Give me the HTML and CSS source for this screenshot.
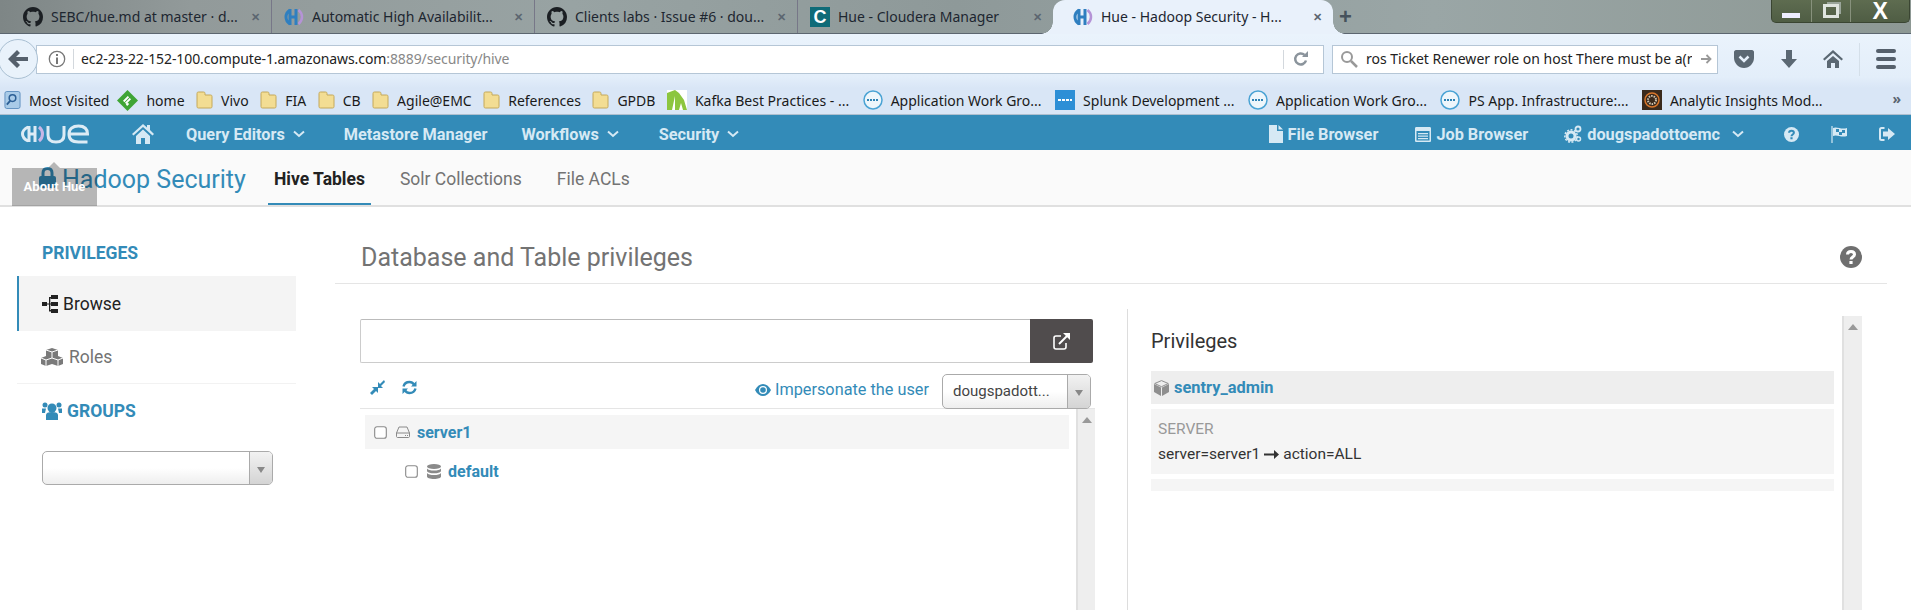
FILE: index.html
```
<!DOCTYPE html>
<html lang="en">
<head>
<meta charset="utf-8">
<title>Hue - Hadoop Security - Hive Tables</title>
<link rel="stylesheet" href="styles.css">
</head>
<body>
<svg class="defs" width="0" height="0" aria-hidden="true">
  <symbol id="gh" viewBox="0 0 16 16"><path fill="#1b1f23" d="M8 0C3.58 0 0 3.58 0 8c0 3.54 2.29 6.53 5.47 7.59.4.07.55-.17.55-.38 0-.19-.01-.82-.01-1.49-2.01.37-2.53-.49-2.69-.94-.09-.23-.48-.94-.82-1.13-.28-.15-.68-.52-.01-.53.63-.01 1.08.58 1.23.82.72 1.21 1.87.87 2.33.66.07-.52.28-.87.51-1.07-1.78-.2-3.64-.89-3.64-3.95 0-.87.31-1.59.82-2.15-.08-.2-.36-1.02.08-2.12 0 0 .67-.21 2.2.82.64-.18 1.32-.27 2-.27.68 0 1.36.09 2 .27 1.53-1.04 2.2-.82 2.2-.82.44 1.1.16 1.92.08 2.12.51.56.82 1.27.82 2.15 0 3.07-1.87 3.75-3.65 3.95.29.25.54.73.54 1.48 0 1.07-.01 1.93-.01 2.2 0 .21.15.46.55.38A8.013 8.013 0 0016 8c0-4.42-3.58-8-8-8z"/></symbol>
  <symbol id="huefav" viewBox="0 0 20 20"><path fill="none" stroke="#2f7fc0" stroke-width="3" d="M6 3C3 5 2 7.500 2 10s1 5 4 7M6 2v16M12 2v16M5 10h8"/><path fill="none" stroke="#b593d6" stroke-width="2.500" d="M14.500 3c2.500 2 3.500 4.500 3.500 7s-1 5-3.500 7"/></symbol>
  <symbol id="folder" viewBox="0 0 17 20"><path fill="#f3dd93" stroke="#c4a85a" d="M1 3.500C1 2.500 1.500 2 2.500 2h5c1 0 1.500.5 1.500 1.500V5h5.500c1 0 1.500.5 1.500 1.500v10c0 1-.5 1.500-1.500 1.500h-12C1.500 18 1 17.500 1 16.500z"/></symbol>
  <symbol id="dell" viewBox="0 0 20 20"><circle cx="10" cy="10" r="9" fill="#eef6fb" stroke="#4aa3d4" stroke-width="1.500"/><path stroke="#2f83b5" stroke-width="2" stroke-dasharray="2 1" d="M4 10h12"/></symbol>
  <symbol id="chev" viewBox="0 0 12 8"><path fill="none" stroke="#d6e9f4" stroke-width="2" d="M1 1.500l5 4.500 5-4.500"/></symbol>
  <symbol id="help" viewBox="0 0 22 22"><circle cx="11" cy="11" r="11"/><path fill="none" stroke="currentColor" stroke-width="3" d="M7.500 8.500C7.500 6.500 9 5.500 11 5.500s3.500 1 3.500 3c0 2.500-3.500 2.500-3.500 5"/><path fill="currentColor" d="M9.400 15h3.200v3h-3.200z"/></symbol>
  <symbol id="check" viewBox="0 0 14 14"><rect x=".75" y=".75" width="12.500" height="12.500" rx="2.500" fill="#fff" stroke="#8a8a8a" stroke-width="1.200"/></symbol>
</svg>

<header class="tabstrip">
  <div class="tab"><svg class="fav"><use href="#gh"/></svg><span class="tab-t">SEBC/hue.md at master · d...</span><span class="tab-x">✕</span></div>
  <div class="tab tab-b"><svg class="fav"><use href="#huefav"/></svg><span class="tab-t">Automatic High Availabilit...</span><span class="tab-x">✕</span></div>
  <div class="tab tab-c"><svg class="fav"><use href="#gh"/></svg><span class="tab-t">Clients labs · Issue #6 · dou...</span><span class="tab-x">✕</span></div>
  <div class="tab tab-d"><span class="cm-logo">C</span><span class="tab-t">Hue - Cloudera Manager</span><span class="tab-x">✕</span></div>
  <div class="tab tab-on"><svg class="fav"><use href="#huefav"/></svg><span class="tab-t">Hue - Hadoop Security - H...</span><span class="tab-x">✕</span></div>
  <span class="newtab">+</span>
  <div class="winbtns">
    <span class="win win-min"><i></i></span>
    <span class="win win-max"><i></i></span>
    <span class="win win-close">X</span>
  </div>
</header>

<div class="toolbar">
  <div class="backbtn"><svg width="22" height="20" viewBox="0 0 22 20"><path fill="#55606c" d="M10 1l3 3-4 4h12v4H9l4 4-3 3-9-9z"/></svg></div>
  <div class="urlbar">
    <svg class="info" width="18" height="18" viewBox="0 0 18 18"><circle cx="9" cy="9" r="7.700" fill="none" stroke="#777" stroke-width="1.300"/><path fill="#777" d="M8 4h2v2H8zM8 7.500h2V14H8z"/></svg>
    <span class="url">ec2-23-22-152-100.compute-1.amazonaws.com<span class="url-dim">:8889/security/hive</span></span>
    <svg class="reload" width="18" height="18" viewBox="0 0 18 18"><path fill="none" stroke="#8b949c" stroke-width="2.500" d="M14 10.500A5.500 5.500 0 1 1 12.500 5"/><path fill="#8b949c" d="M10 7h6V1z"/></svg>
  </div>
  <div class="searchbar">
    <svg width="18" height="18" viewBox="0 0 18 18"><circle cx="7" cy="7" r="5" fill="none" stroke="#999" stroke-width="2"/><path stroke="#999" stroke-width="2.500" d="M11 11l6 6"/></svg>
    <span class="search-t">ros Ticket Renewer role on host There must be a(r</span>
    <svg width="12" height="12" viewBox="0 0 12 12"><path fill="none" stroke="#999" stroke-width="1.800" d="M1 6h9M6.500 2l4 4-4 4"/></svg>
  </div>
  <svg class="tb-ic tb-pocket" width="20" height="20" viewBox="0 0 20 20"><path fill="#5b6873" d="M2 1h16c1 0 2 1 2 2v6c0 5-4.500 10-10 10S0 14 0 9V3c0-1 1-2 2-2z"/><path fill="none" stroke="#e6f0fb" stroke-width="2.500" d="M5.500 7.500L10 12l4.500-4.500"/></svg>
  <svg class="tb-ic tb-down" width="18" height="20" viewBox="0 0 18 20"><path fill="#5b6873" d="M6 1h6v9h5l-8 9-8-9h5z"/></svg>
  <svg class="tb-ic tb-home" width="20" height="20" viewBox="0 0 20 20"><path fill="#5b6873" d="M10 1l10 9-1.500 1.500L10 4l-8.500 7.500L0 10z"/><path fill="#5b6873" d="M4 12l6-5 6 5v7h-4v-5H8v5H4z"/></svg>
  <span class="tb-sep"></span>
  <div class="burger"><i></i><i></i><i></i></div>
</div>

<nav class="bookmarks">
  <span class="bm bm-first"><svg class="bm-ic" viewBox="0 0 18 20"><rect x="1" y="1" width="16" height="18" rx="2" fill="#a9cbe8" stroke="#5f8fbf"/><circle cx="9" cy="8" r="3.500" fill="none" stroke="#2c5f95" stroke-width="1.600"/><path stroke="#2c5f95" stroke-width="2" d="M6.500 11L3 15"/></svg>Most Visited</span>
  <span class="bm"><svg class="bm-ic bm-home" viewBox="0 0 22 22"><path fill="#3fa535" d="M11 0l11 11-11 11L0 11z"/><path stroke="#fff" stroke-width="2" d="M7 12l5-5M9 14l5-5M10 16l2-2"/></svg>home</span>
  <span class="bm"><svg class="bm-ic"><use href="#folder"/></svg>Vivo</span>
  <span class="bm"><svg class="bm-ic"><use href="#folder"/></svg>FIA</span>
  <span class="bm"><svg class="bm-ic"><use href="#folder"/></svg>CB</span>
  <span class="bm"><svg class="bm-ic"><use href="#folder"/></svg>Agile@EMC</span>
  <span class="bm"><svg class="bm-ic"><use href="#folder"/></svg>References</span>
  <span class="bm"><svg class="bm-ic"><use href="#folder"/></svg>GPDB</span>
  <span class="bm bm-long"><svg class="bm-ic bm-w20" viewBox="0 0 20 20"><path fill="#fff" d="M0 0h20v20H0z"/><path fill="#8cc63f" d="M0 20V3L8 0l4 3 5 7 3 10h-4l-2-7-2 7H8V6L5 20z"/></svg>Kafka Best Practices - ...</span>
  <span class="bm bm-long"><svg class="bm-ic bm-w20"><use href="#dell"/></svg>Application Work Gro...</span>
  <span class="bm bm-long"><svg class="bm-ic bm-w20" viewBox="0 0 20 20"><path fill="#2d8fd6" d="M0 0h20v20H0z"/><path stroke="#fff" stroke-width="2" stroke-dasharray="3 1" d="M3 10h14"/></svg>Splunk Development ...</span>
  <span class="bm bm-long"><svg class="bm-ic bm-w20"><use href="#dell"/></svg>Application Work Gro...</span>
  <span class="bm bm-long"><svg class="bm-ic bm-w20"><use href="#dell"/></svg>PS App. Infrastructure:...</span>
  <span class="bm"><svg class="bm-ic bm-w20" viewBox="0 0 20 20"><path fill="#3a2a1c" d="M0 0h20v20H0z"/><circle cx="10" cy="10" r="7" fill="none" stroke="#d9772b" stroke-width="1.500"/><circle cx="10" cy="10" r="4" fill="none" stroke="#cfc4b0" stroke-width="2" stroke-dasharray="1.500 1"/></svg>Analytic Insights Mod...</span>
  <span class="bm-more">»</span>
</nav>

<nav class="huenav">
  <svg class="huelogo" width="68" height="20" viewBox="0 0 68 20" role="img" aria-label="Hue">
    <g fill="none" stroke="#dcebf5" stroke-width="3">
      <path d="M7 3C3 5 1.500 7.500 1.500 10S3 15 7 17M8 2v16M14 2v16M7 10h8"/>
      <path stroke="#c9b6e6" d="M18 3c2.500 2 3.500 4.500 3.500 7S20.500 15 18 17"/>
      <path d="M27 2v9c0 4.500 2.500 7 8 7s8-2.500 8-7V2"/>
      <path d="M48 10h18.500c0-5-3-8-9-8S48 5 48 10s3 8 9.500 8h9"/>
    </g>
  </svg>
  <svg class="nav-home" width="22" height="20" viewBox="0 0 22 20"><path fill="#d6e9f4" d="M11 0l4 3.500V1h3v5l4 4-1.500 1.500L11 3 1.500 11.500 0 10z"/><path fill="#d6e9f4" d="M4 12l7-6.500 7 6.500v8h-5v-6H9v6H4z"/></svg>
  <span class="ni ni-q">Query Editors<svg class="chev"><use href="#chev"/></svg></span>
  <span class="ni ni-m">Metastore Manager</span>
  <span class="ni ni-w">Workflows<svg class="chev"><use href="#chev"/></svg></span>
  <span class="ni ni-s">Security<svg class="chev"><use href="#chev"/></svg></span>
  <div class="nav-right">
    <span class="ni"><svg class="ni-ic" width="14" height="18" viewBox="0 0 14 18"><path fill="#d6e9f4" d="M0 0h8v6h6v12H0zM9.500 0L14 4.500H9.500z"/></svg>File Browser</span>
    <span class="ni ni-job"><svg class="ni-ic" width="16" height="15" viewBox="0 0 16 15"><path fill="#d6e9f4" fill-rule="evenodd" d="M1.500 0h13C15.500 0 16 .5 16 1.500v12c0 1-.5 1.500-1.500 1.500h-13C.5 15 0 14.500 0 13.500v-12C0 .5.500 0 1.500 0zM1.500 4v9.500h13V4zM3 6h10v1.300H3zM3 8.500h10v1.300H3zM3 11h10v1.300H3z"/></svg>Job Browser</span>
    <span class="ni ni-user"><svg class="ni-ic" width="18" height="18" viewBox="0 0 18 18"><circle cx="7" cy="11" r="4" fill="none" stroke="#d6e9f4" stroke-width="3"/><circle cx="7" cy="11" r="6.200" fill="none" stroke="#d6e9f4" stroke-width="1.500" stroke-dasharray="2 1.500"/><circle cx="14" cy="4" r="2.500" fill="none" stroke="#d6e9f4" stroke-width="1.800"/><circle cx="14.500" cy="14" r="2" fill="none" stroke="#d6e9f4" stroke-width="1.500"/></svg>dougspadottoemc<svg class="chev chev-u"><use href="#chev"/></svg></span>
    <svg class="ni-help" width="15" height="15"><use href="#help"/></svg>
    <svg class="ni-flag" width="16" height="17" viewBox="0 0 16 17"><path stroke="#d6e9f4" stroke-width="1.200" d="M1 0v17"/><path fill="#d6e9f4" d="M2 2c4-2 8 2 14 0v8c-6 2-10-2-14 0z"/><path fill="#338bb8" d="M5 3h3v3H5zM11 4h3v3h-3zM8 6h3v3H8z"/></svg>
    <svg class="ni-out" width="16" height="14" viewBox="0 0 16 14"><path fill="none" stroke="#d6e9f4" stroke-width="2" d="M5.500 1H2.500C1.500 1 1 1.500 1 2.500v9c0 1 .5 1.500 1.500 1.500h3"/><path fill="#d6e9f4" d="M4 4.500h5V1l7 6-7 6V9.500H4z"/></svg>
  </div>
</nav>

<div class="subnav">
  <svg class="lock" width="17" height="21" viewBox="0 0 17 21"><path fill="none" stroke="#338bb8" stroke-width="3" d="M4 10V6c0-3 2-4.500 4.500-4.500S13 3 13 6v4"/><rect y="9" width="17" height="12" rx="2" fill="#338bb8"/></svg>
  <span class="brand">Hadoop Security</span>
  <span class="subtab subtab-on">Hive Tables</span>
  <span class="subtab">Solr Collections</span>
  <span class="subtab">File ACLs</span>
  <div class="tooltip">About Hue</div>
</div>

<main class="page">
  <aside class="side">
    <h4 class="side-h">PRIVILEGES</h4>
    <div class="side-i side-on"><svg width="16" height="18" viewBox="0 0 16 18"><path fill="#222" d="M0 7h5v4H0zM9 0h7v4H9zM9 7h7v4H9zM9 14h7v4H9zM5 8.500h2V2h2v1.500H8.300V8.500H9v1H8.300V15H9v1.500H7V9.500H5z"/></svg>Browse</div>
    <div class="side-i side-roles"><svg width="22" height="18" viewBox="0 0 22 18"><path fill="#7a7a7a" d="M11 0l6 2v6l-6 2-6-2V2zM5 8l6 2v6l-6 2-5-2v-6zM17 8l5 2v6l-5 2-6-2v-6z"/><path fill="none" stroke="#fff" stroke-width="1" d="M5 2l6 2 6-2M11 4v6M0 10l5 2 6-2M5 12v6M11 10l6 2 5-2M17 12v6"/></svg>Roles</div>
    <h4 class="side-h side-g"><svg width="20" height="18" viewBox="0 0 20 18"><circle cx="10" cy="6" r="4.500" fill="#338bb8"/><circle cx="3" cy="3" r="2.500" fill="#338bb8"/><circle cx="17" cy="3" r="2.500" fill="#338bb8"/><path fill="#338bb8" d="M4 18v-5c0-2 2-3 6-3s6 1 6 3v5zM0 6.500h4L3 11H0zM16 6.500h4V11h-3z"/></svg>GROUPS</h4>
    <div class="combo combo-g"><span class="combo-t"></span><span class="combo-a"></span></div>
  </aside>

  <section class="content">
    <div class="title-row">
      <h1 class="title">Database and Table privileges</h1>
      <svg class="title-help" width="22" height="22"><use href="#help"/></svg>
    </div>
    <div class="panes">
      <div class="left">
        <div class="inputgrp">
          <input class="tree-input" type="text" aria-label="Path">
          <span class="go"><svg width="17" height="17" viewBox="0 0 17 17"><path fill="none" stroke="#fff" stroke-width="1.600" d="M8 3H3C1.800 3 1 3.800 1 5v9c0 1.200.8 2 2 2h8c1.200 0 2-.8 2-2v-4"/><path fill="none" stroke="#fff" stroke-width="2" d="M6 11l9-9"/><path fill="#fff" d="M10 0h7v7z"/></svg></span>
        </div>
        <div class="actions">
          <svg class="act" width="15" height="15" viewBox="0 0 15 15"><path fill="#338bb8" d="M0 13l4-4-2-2h6v6l-2-2-4 4zM15 2l-4 4 2 2H8V2l2 2 4-4z"/></svg>
          <svg class="act act-r" width="15" height="15" viewBox="0 0 15 15"><path fill="none" stroke="#338bb8" stroke-width="2.400" d="M1.500 6.500C2.300 3.500 4.500 2 7.500 2c2 0 3.500 1 4.500 2.500M13.500 8.500c-.8 3-3 4.500-6 4.500-2 0-3.500-1-4.500-2.500"/><path fill="#338bb8" d="M14.500 1v5.500H9zM.5 14V8.500H6z"/></svg>
          <span class="imp"><svg width="16" height="12" viewBox="0 0 16 12"><path fill="#338bb8" fill-rule="evenodd" d="M0 6c2-4 5-6 8-6s6 2 8 6c-2 4-5 6-8 6S2 10 0 6zm8-4a4 4 0 1 0 0 8 4 4 0 0 0 0-8z"/><circle cx="8" cy="6" r="2.800" fill="#338bb8"/></svg>Impersonate the user</span>
          <div class="combo combo-u"><span class="combo-t">dougspadott...</span><span class="combo-a"></span></div>
        </div>
        <div class="treebox">
          <div class="tree">
            <div class="node node-root"><svg class="cb"><use href="#check"/></svg><svg class="nic" width="14" height="12" viewBox="0 0 14 12"><path fill="none" stroke="#8a8a8a" d="M3 1h8l2.500 6v3.500c0 .5-.5 1-1 1h-11c-.5 0-1-.5-1-1V7zM.5 7h13"/><path fill="#8a8a8a" d="M9 9h1v1H9zM11 9h1v1h-1z"/></svg><a class="lnk">server1</a></div>
            <div class="node node-db"><svg class="cb"><use href="#check"/></svg><svg class="nic" width="14" height="15" viewBox="0 0 14 15"><ellipse cx="7" cy="2.500" rx="7" ry="2.500" fill="#8a8a8a"/><path fill="#8a8a8a" d="M0 4.500c1 1.500 3.500 2 7 2s6-.5 7-2v2.800c-1 1.500-3.500 2-7 2s-6-.5-7-2zM0 9c1 1.500 3.500 2 7 2s6-.5 7-2v3.500C14 14 11 15 7 15s-7-1-7-2.500z"/></svg><a class="lnk">default</a></div>
          </div>
          <div class="sbar"><span class="sbar-up"></span></div>
        </div>
      </div>
      <div class="right">
        <div class="right-main">
          <h3 class="priv-h">Privileges</h3>
          <div class="role"><svg width="15" height="16" viewBox="0 0 15 16"><path fill="#8f8f8f" d="M7 7.500L0 4v8l7 4zM8 7.500L15 4v8l-7 4z"/><path fill="none" stroke="#8f8f8f" d="M.7 3.500L7.500.6l6.800 2.900-6.800 3.200z"/></svg><a class="lnk lnk-role">sentry_admin</a></div>
          <div class="priv">
            <div class="priv-type">SERVER</div>
            <div class="priv-v">server=server1<svg width="15" height="9" viewBox="0 0 15 9"><path fill="#333" d="M0 3.500h10V0l5 4.500L10 9V5.500H0z"/></svg>action=ALL</div>
          </div>
          <div class="priv-empty"></div>
        </div>
        <div class="sbar sbar-r"><span class="sbar-up"></span></div>
      </div>
    </div>
  </section>
</main>
</body>
</html>
```
FILE: styles.css
```
* { box-sizing: border-box; }
html, body { margin: 0; height: 100%; overflow: hidden; background: #fff; }
body { width: 1911px; height: 610px; display: flex; flex-direction: column; font-family: Roboto, "Liberation Sans", sans-serif; color: #333; }
.defs { position: absolute; }
svg { flex: none; display: block; }
h1, h3, h4 { margin: 0; }

/* browser chrome */
.tabstrip { height: 34px; flex: none; display: flex; align-items: center; position: relative; padding-left: 0; font-family: "Noto Sans", sans-serif; font-size: 14px; color: #1d2630;
  background: linear-gradient(90deg, #7e8686 0, #929a9a 10%, #98a3a3 30%, #8e9999 50%, #9aa6a6 75%, #8d9894 100%); border-bottom: 1px solid #5c6670; }
.tab { width: 272px; height: 33px; display: flex; align-items: center; padding: 0 0 0 23px; border-right: 1px solid #778; flex: none; position: relative; }
.tab-b { width: 263px; padding-left: 12px; }
.tab-c { width: 263px; padding-left: 12px; }
.tab-d { width: 255px; padding-left: 12px; border-right: 0; }
.tab-on { width: 280px; padding-left: 20px; border-right: 0; height: 34px; background: #e9f1fb; border-radius: 12px 12px 0 0; }
.tab-on::before, .tab-on::after { content: ""; position: absolute; bottom: 0; width: 12px; height: 12px; }
.tab-on::before { left: -12px; background: radial-gradient(circle at 0 0, transparent 11.500px, #e9f1fb 12px); }
.tab-on::after { right: -12px; background: radial-gradient(circle at 100% 0, transparent 11.500px, #e9f1fb 12px); }
.fav { width: 20px; height: 20px; margin-right: 8px; flex: none; }
.cm-logo { width: 20px; height: 20px; margin-right: 8px; background: #0f6b78; color: #fff; font: 700 18px/20px "Liberation Sans", sans-serif; text-align: center; }
.tab-t { flex: 1; white-space: nowrap; overflow: hidden; }
.tab-x { width: 12px; margin-right: 10px; font-size: 11px; font-weight: 700; color: #5b6670; text-align: center; }
.newtab { margin-left: 6px; font: 700 22px/1 "Liberation Sans", sans-serif; color: #46525c; }
.winbtns { position: absolute; right: 1px; top: 0; height: 23px; width: 139px; display: flex; background: linear-gradient(#5e6c50, #4f5d44); border: 1px solid #3a4532; border-top: 0; border-radius: 0 0 5px 5px; }
.win { flex: 1; display: flex; align-items: center; justify-content: center; border-right: 1px solid #87917c; color: #fff; }
.win-close { flex: 1.500; border-right: 0; font: 700 23px/1 "Liberation Sans", sans-serif; }
.win-min i { width: 18px; height: 5px; background: #eef; margin-top: 8px; }
.win-max i { width: 16px; height: 14px; border: 3px solid #dfe5df; box-shadow: 3px -3px 0 -1px #9aa59a; }

.toolbar { height: 43px; flex: none; display: flex; align-items: center; background: linear-gradient(#eaf3fc, #e3eefa); font-family: "Noto Sans", sans-serif; font-size: 14px; position: relative; padding-left: 36px; padding-top: 7px; }
.backbtn { position: absolute; left: -2px; top: 5px; width: 40px; height: 40px; border-radius: 50%; background: #e9f2fb; border: 1px solid #a9bfd2; display: flex; align-items: center; justify-content: center; z-index: 1; }
.urlbar { width: 1288px; height: 29px; background: #fff; border: 1px solid #b5c6d6; display: flex; align-items: center; padding-left: 11px; position: relative; }
.info { margin-right: 7px; }
.url { border-left: 1px solid #d3d8dd; padding-left: 7px; color: #222; white-space: nowrap; line-height: 20px; letter-spacing: -.1px; }
.url-dim { color: #888; }
.reload { margin-left: auto; margin-right: 13px; }
.urlbar::after { content: ""; position: absolute; left: 1246px; top: 4px; height: 19px; border-left: 1px solid #d3d8dd; }
.searchbar { width: 386px; height: 29px; margin-left: 8px; background: #fff; border: 1px solid #b5c6d6; display: flex; align-items: center; padding-left: 7px; gap: 8px; }
.search-t { width: 326px; overflow: hidden; white-space: nowrap; color: #222; line-height: 20px; }
.tb-ic { margin-left: 16px; }
.tb-down { margin-left: 26px; }
.tb-home { margin-left: 25px; }
.tb-sep { width: 1px; height: 33px; background: #d4dfe9; margin-left: 16px; }
.burger { width: 20px; margin-left: 16px; display: flex; flex-direction: column; gap: 4px; }
.burger i { height: 4px; border-radius: 2px; background: #55606c; }

.bookmarks { height: 38px; flex: none; display: flex; align-items: center; padding: 9px 0 0 4px; background: linear-gradient(#e3eefa, #d9e6f6 30%); font-family: "Noto Sans", sans-serif; font-size: 14px; color: #1a1a1a; border-bottom: 1px solid #aebfcf; position: relative; }
.bm { display: flex; align-items: center; gap: 8px; margin-right: 11.500px; white-space: nowrap; }
.bm-first { margin-right: 8px; }
.bm-long { margin-right: 13.500px; }
.bm-ic { width: 17px; height: 20px; }
.bm-home { width: 21px; height: 21px; }
.bm-w20 { width: 20px; height: 20px; }
.bm-more { position: absolute; right: 10px; top: 12px; color: #5a6570; font-weight: 700; }

/* hue nav */
.huenav { height: 35px; flex: none; display: flex; align-items: center; background: #338bb8; color: #d6e9f4; font-size: 16.300px; font-weight: 700; padding: 3px 0 0 21px; }
.nav-home { margin-left: 43px; }
.ni { display: flex; align-items: center; white-space: nowrap; }
.ni-q { margin-left: 32px; }
.ni-m { margin-left: 39px; }
.ni-w { margin-left: 34px; }
.ni-s { margin-left: 40px; }
.chev { width: 12px; height: 8px; margin-left: 8px; }
.chev-u { margin-left: 12px; }
.nav-right { margin-left: auto; display: flex; align-items: center; padding-right: 16px; }
.ni-ic { margin-right: 5px; }
.ni-job { margin-left: 37px; }
.ni-user { margin-left: 36px; }
.ni-help { fill: #d6e9f4; color: #338bb8; margin-left: 40px; }
.ni-flag { margin-left: 32px; }
.ni-out { margin-left: 32px; }

.subnav { height: 57px; flex: none; display: flex; align-items: stretch; background: #fafafa; border-bottom: 2px solid #e0e0e0; padding-left: 39px; position: relative; }
.lock { align-self: center; margin-right: 6px; }
.brand { align-self: center; margin-top: 3px; font-size: 25px; color: #338bb8; white-space: nowrap; width: 206px; }
.subtab { display: flex; align-items: center; padding: 2px 6px 0; margin-right: 23px; font-size: 17.500px; color: #737373; white-space: nowrap; }
.subtab-on { color: #222; font-weight: 700; box-shadow: inset 0 -2px 0 #338bb8; }
.tooltip { position: absolute; left: 12px; top: 18px; width: 85px; height: 38px; background: rgba(0,0,0,.27); color: #fff; font-size: 13px; font-weight: 700; text-align: center; line-height: 38px; }
.tooltip::before { content: ""; position: absolute; left: 36px; top: -6px; border: 6px solid transparent; border-top: 0; border-bottom-color: rgba(0,0,0,.27); }

/* page */
.page { flex: 1; display: flex; min-height: 0; }
.side { width: 279px; margin-left: 17px; flex: none; }
.side-h { color: #338bb8; font-size: 17.500px; font-weight: 700; line-height: 20px; padding-left: 25px; margin-top: 36px; margin-bottom: 13px; display: flex; align-items: center; }
.side-i { height: 55px; display: flex; align-items: center; padding-left: 25px; font-size: 17.500px; gap: 5px; }
.side-on { background: #f4f4f4; border-left: 2px solid #338bb8; padding-left: 23px; color: #222; }
.side-roles { height: 53px; border-bottom: 1px solid #f2f2f2; color: #737373; gap: 6px; padding-left: 24px; }
.side-g { margin: 17px 0 30px; gap: 5px; padding-left: 25px; }
.combo { display: flex; border: 1px solid #aaa; border-radius: 5px; background: linear-gradient(#fff 50%, #eee); }
.combo-g { margin-left: 25px; width: 231px; height: 34px; }
.combo-t { flex: 1; font-size: 14px; line-height: 33px; padding-left: 7px; white-space: nowrap; overflow: hidden; color: #444; }
.combo-a { width: 23px; border-left: 1px solid #aaa; border-radius: 0 4px 4px 0; background: linear-gradient(#f2f2f2, #d4d4d4); position: relative; }
.combo-a::after { content: ""; position: absolute; left: 7px; top: 15px; border: 4px solid transparent; border-bottom: 0; border-top: 6px solid #888; }
.content { flex: 1; margin-left: 39px; margin-right: 24px; min-width: 0; display: flex; flex-direction: column; }
.title-row { height: 77px; flex: none; display: flex; align-items: flex-end; justify-content: space-between; border-bottom: 1px solid #e5e5e5; padding: 0 25px 0 26px; position: relative; }
.title { font-size: 25px; font-weight: 400; color: #737373; line-height: 28px; margin-bottom: 11px; white-space: nowrap; }
.title-help { fill: #6f6f6f; color: #fff; margin-bottom: 15px; }
.panes { flex: 1; min-height: 0; display: flex; margin-top: 25px; }
.left { width: 735px; margin-left: 25px; flex: none; padding-top: 10px; display: flex; flex-direction: column; min-height: 0; }
.inputgrp { height: 44px; display: flex; flex: none; margin-right: 2px; }
.tree-input { flex: 1; height: 44px; border: 1px solid #ccc; border-top-color: #bbb; border-right: 0; border-radius: 2px 0 0 2px; outline: 0; background: #fff; padding: 0; }
.go { width: 63px; background: #504c4d; display: flex; align-items: center; justify-content: center; border-radius: 0 2px 2px 0; }
.actions { height: 46px; flex: none; display: flex; align-items: flex-end; border-bottom: 1px solid #e5e5e5; padding: 0 4px 0 10px; position: relative; }
.act { margin-bottom: 13px; }
.act-r { margin-left: 17px; }
.imp { margin-left: auto; display: flex; align-items: center; gap: 4px; color: #338bb8; font-size: 16.300px; margin-right: 13px; margin-bottom: 9px; }
.combo-u { width: 149px; height: 35px; margin-bottom: -1px; }
.combo-u .combo-t { font-size: 15px; line-height: 33px; padding-left: 10px; }
.treebox { flex: 1; display: flex; min-height: 0; }
.tree { flex: 1; padding: 6px 7px 0 5px; }
.node { display: flex; align-items: center; height: 34px; }
.node-root { background: #f5f5f5; padding-left: 9px; }
.node-db { margin-top: 2px; padding-left: 40px; height: 40px; }
.cb { width: 13px; height: 13px; margin-right: 9px; }
.nic { margin-right: 7px; }
.lnk { color: #338bb8; font-size: 16px; font-weight: 700; }
.lnk-role { font-size: 16.400px; }
.sbar { width: 19px; flex: none; background: #eee; border-left: 2px solid #e0e0e0; position: relative; }
.sbar-up { position: absolute; left: 4px; top: 8px; border: 5px solid transparent; border-top: 0; border-bottom: 6px solid #999; }
.right { flex: 1; margin-left: 32px; border-left: 1px solid #ddd; display: flex; padding-left: 23px; min-width: 0; padding-right: 1px; }
.right-main { width: 683px; flex: none; }
.priv-h { font-size: 20px; font-weight: 400; color: #333; line-height: 24px; margin: 20px 0 18px; }
.role { height: 33px; background: #eee; display: flex; align-items: center; padding-left: 3px; gap: 5px; }
.priv { height: 65px; margin-top: 5px; background: #f5f5f5; padding: 10px 7px 0; font-size: 15.500px; }
.priv-type { color: #999; line-height: 20px; margin-bottom: 5px; }
.priv-v { display: flex; align-items: center; gap: 4px; color: #333; line-height: 20px; white-space: pre; }
.priv-empty { height: 12px; margin-top: 5px; background: #f5f5f5; }
.sbar-r { margin: 7px 0 0 8px; width: 20px; }
```
